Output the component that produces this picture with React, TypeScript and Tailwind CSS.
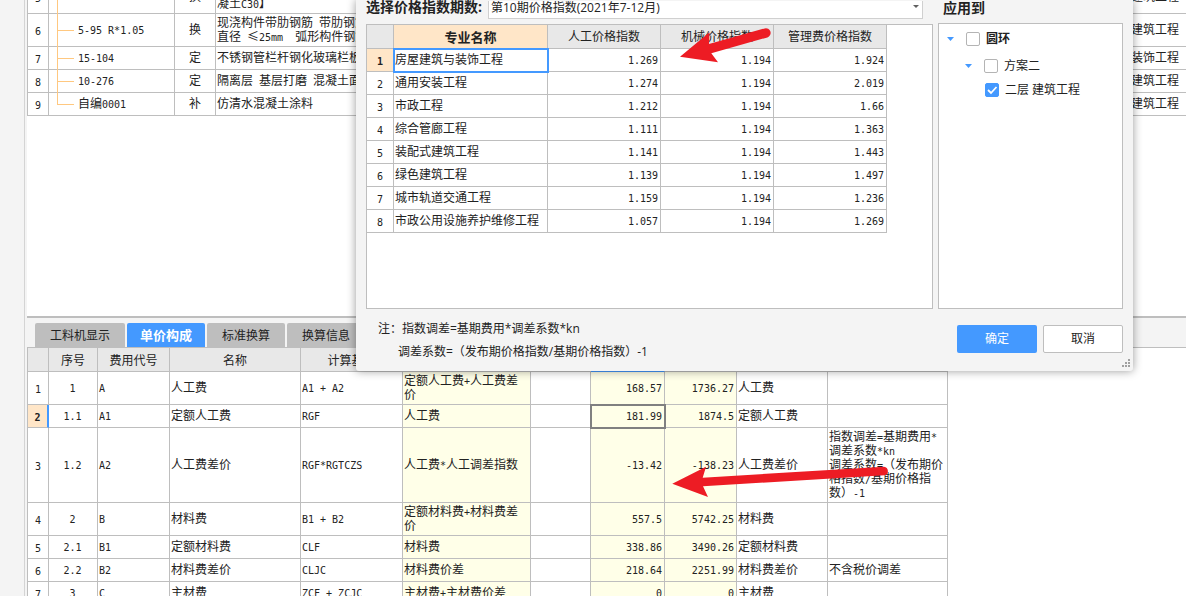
import { Fragment, type ReactNode } from "react";

const GRID_FONT = "font-['Noto_Sans_CJK_SC',sans-serif] text-xs leading-[14px] text-[#222222]";
const UI_FONT = "font-['Open_Sans','Noto_Sans_CJK_SC',sans-serif]";
const LINE = "border-[#bebebe]";

/** Grid text: Latin runs are set in half-width monospace, like the CJK cell grid. */
function Song({ text }: { text: string }) {
  const parts = text.split(/([\x20-\x7e]+)/).filter(Boolean);
  return (
    <>
      {parts.map((part, i) =>
        /^[\x20-\x7e]+$/.test(part) ? (
          <span key={i} className="font-['DejaVu_Sans_Mono',monospace] text-[10px] leading-none whitespace-pre">
            {part}
          </span>
        ) : (
          <Fragment key={i}>{part}</Fragment>
        ),
      )}
    </>
  );
}

function Lines({ text }: { text: string }) {
  return (
    <>
      {text.split("\n").map((line, i) => (
        <span key={i} className="block min-h-[14px] whitespace-nowrap">
          <Song text={line} />
        </span>
      ))}
    </>
  );
}

type Item = { no: string; code: string; kind: string; name: string; major: string; tall?: boolean };

const items: Item[] = [
  { no: "5", code: "", kind: "换", name: "\n凝土C30】", major: "建筑工程", tall: true },
  { no: "6", code: "5-95 R*1.05", kind: "换", name: "现浇构件带肋钢筋 带肋钢筋\n直径 ≤25mm  弧形构件钢筋", major: "建筑工程", tall: true },
  { no: "7", code: "15-104", kind: "定", name: "不锈钢管栏杆钢化玻璃栏板", major: "装饰工程" },
  { no: "8", code: "10-276", kind: "定", name: "隔离层 基层打磨 混凝土面", major: "建筑工程" },
  { no: "9", code: "自编0001", kind: "补", name: "仿清水混凝土涂料", major: "建筑工程" },
];

function ItemTable() {
  const cell = `border-r border-b ${LINE}`;
  return (
    <table className={`-mt-5 w-full table-fixed border-separate border-spacing-0 border-t border-l ${LINE} ${GRID_FONT}`}>
      <colgroup>
        <col className="w-[21px]" />
        <col className="w-[126px]" />
        <col className="w-[41px]" />
        <col />
        <col className="w-[55px]" />
      </colgroup>
      <tbody>
        {items.map((item, i) => (
          <tr key={item.no} className={item.tall ? "h-[33px]" : "h-[23px]"}>
            <td className={`${cell} p-0 text-center`}>
              <Song text={item.no} />
            </td>
            <td className={`${cell} relative pt-0 pr-0 pb-0.5 pl-[29px]`}>
              <span className={`absolute top-0 left-2 w-px bg-[#ffc880] ${i === items.length - 1 ? "bottom-1/2" : "-bottom-px"}`} />
              <span className="absolute top-1/2 left-2 h-px w-[17px] bg-[#ffc880]" />
              <Song text={item.code} />
            </td>
            <td className={`${cell} px-0 pt-0 pb-0.5 text-center`}>{item.kind}</td>
            <td className={`${cell} overflow-hidden px-px pt-0 pb-0.5`}>
              <Lines text={item.name} />
            </td>
            <td className={`border-b ${LINE} px-0 pt-0 pb-0.5 whitespace-nowrap`}>{item.major}</td>
          </tr>
        ))}
      </tbody>
    </table>
  );
}

const feeHeaders = ["", "序号", "费用代号", "名称", "计算基数", "", "", "", "", "", ""];

type Fee = { h: string; cells: string[] };

const fees: Fee[] = [
  { h: "h-[33px]", cells: ["1", "A", "人工费", "A1 + A2", "定额人工费+人工费差\n价", "", "168.57", "1736.27", "人工费", ""] },
  { h: "h-[23px]", cells: ["1.1", "A1", "定额人工费", "RGF", "人工费", "", "181.99", "1874.5", "定额人工费", ""] },
  { h: "h-[75px]", cells: ["1.2", "A2", "人工费差价", "RGF*RGTCZS", "人工费*人工调差指数", "", "-13.42", "-138.23", "人工费差价", "指数调差=基期费用*\n调差系数*kn\n调差系数=（发布期价\n格指数/基期价格指\n数）-1"] },
  { h: "h-[33px]", cells: ["2", "B", "材料费", "B1 + B2", "定额材料费+材料费差\n价", "", "557.5", "5742.25", "材料费", ""] },
  { h: "h-[23px]", cells: ["2.1", "B1", "定额材料费", "CLF", "材料费", "", "338.86", "3490.26", "定额材料费", ""] },
  { h: "h-[23px]", cells: ["2.2", "B2", "材料费差价", "CLJC", "材料费价差", "", "218.64", "2251.99", "材料费差价", "不含税价调差"] },
  { h: "h-[23px]", cells: ["3", "C", "主材费", "ZCF + ZCJC", "主材费+主材费价差", "", "0", "0", "主材费", ""] },
];

const feeCellStyle = [
  "text-center",
  "",
  "",
  "",
  "bg-[#ffffe8]",
  "",
  "bg-[#ffffe8] text-right",
  "bg-[#ffffe8] text-right",
  "",
  "",
];

function FeeTable() {
  const selected = 1;
  return (
    <table className={`w-[921px] table-fixed border-separate border-spacing-0 border-l ${LINE} ${GRID_FONT}`}>
      <colgroup>
        <col className="w-[21px]" />
        <col className="w-[49px]" />
        <col className="w-[72px]" />
        <col className="w-[131px]" />
        <col className="w-[102px]" />
        <col className="w-[128px]" />
        <col className="w-[60px]" />
        <col className="w-[74px]" />
        <col className="w-[72px]" />
        <col className="w-[91px]" />
        <col className="w-[120px]" />
      </colgroup>
      <thead>
        <tr className="h-6">
          {feeHeaders.map((h, i) => (
            <th key={i} className={`border-r border-b bg-[#e8e8e8] p-0 font-normal ${i === 7 ? "border-r-[#bebebe] border-b-[#4499ff]" : LINE}`}>
              {h}
            </th>
          ))}
        </tr>
      </thead>
      <tbody>
        {fees.map((fee, r) => (
          <tr key={r} className={fee.h}>
            <th
              className={`border-b border-b-[#bebebe] p-0 ${
                r === selected ? "border-r-2 border-r-[#4499ff] bg-[#ffe6c8] font-bold" : "border-r border-r-[#bebebe] font-normal"
              }`}
            >
              <Song text={String(r + 1)} />
            </th>
            {fee.cells.map((text, c) => (
              <td
                key={c}
                className={`border-r border-b pt-0 pr-0.5 pb-0.5 pl-px ${LINE} ${feeCellStyle[c]} ${
                  r === selected && c === 6 ? "outline-2 -outline-offset-1 outline-[#808080]" : ""
                }`}
              >
                <Lines text={text} />
              </td>
            ))}
          </tr>
        ))}
      </tbody>
    </table>
  );
}

const tabs = [
  { label: "工料机显示", width: "w-[90px]" },
  { label: "单价构成", width: "w-[78px]", active: true },
  { label: "标准换算", width: "w-[78px]" },
  { label: "换算信息", width: "w-[78px]" },
];

const indices = [
  ["房屋建筑与装饰工程", "1.269", "1.194", "1.924"],
  ["通用安装工程", "1.274", "1.194", "2.019"],
  ["市政工程", "1.212", "1.194", "1.66"],
  ["综合管廊工程", "1.111", "1.194", "1.363"],
  ["装配式建筑工程", "1.141", "1.194", "1.443"],
  ["绿色建筑工程", "1.139", "1.194", "1.497"],
  ["城市轨道交通工程", "1.159", "1.194", "1.236"],
  ["市政公用设施养护维修工程", "1.057", "1.194", "1.269"],
];

function IndexTable() {
  return (
    <table className={`w-[520px] table-fixed border-separate border-spacing-0 ${GRID_FONT}`}>
      <colgroup>
        <col className="w-[27px]" />
        <col className="w-[154px]" />
        <col className="w-[113px]" />
        <col className="w-[113px]" />
        <col className="w-[113px]" />
      </colgroup>
      <thead>
        <tr className="h-6">
          <th className={`border-r border-b bg-[#e8e8e8] p-0 ${LINE}`} />
          <th className={`border-r border-b bg-[#ffe6c8] p-0 text-[13px] font-bold ${LINE}`}>专业名称</th>
          {["人工价格指数", "机械价格指数", "管理费价格指数"].map((h) => (
            <th key={h} className={`border-r border-b bg-[#e8e8e8] px-0 pt-0 pb-0.5 font-normal ${LINE}`}>
              {h}
            </th>
          ))}
        </tr>
      </thead>
      <tbody>
        {indices.map((row, r) => (
          <tr key={r} className="h-[23px]">
            <th className={`border-r border-b p-0 ${LINE} ${r === 0 ? "bg-[#ffe6c8] font-bold" : "font-normal"}`}>
              <Song text={String(r + 1)} />
            </th>
            {row.map((text, c) => (
              <td
                key={c}
                className={`border-r border-b pt-0 pr-0.5 pb-0.5 pl-px ${LINE} ${c > 0 ? "text-right" : "whitespace-nowrap"} ${
                  r === 0 && c === 0 ? "outline-2 -outline-offset-1 outline-[#4499ff]" : ""
                }`}
              >
                <Song text={text} />
              </td>
            ))}
          </tr>
        ))}
      </tbody>
    </table>
  );
}

function TreeNode({ indent, expanded, checked, bold, children }: { indent: string; expanded?: boolean; checked?: boolean; bold?: boolean; children: ReactNode }) {
  return (
    <li className={`flex h-6 items-center ${indent}`}>
      {expanded && (
        <button type="button" aria-label="展开" className="mr-3 flex w-[7px]">
          <svg viewBox="0 0 7 4" className="h-1 w-[7px]" fill="#4499ff">
            <path d="M0 0h7L3.5 4z" />
          </svg>
        </button>
      )}
      <label className="flex items-center gap-1.5">
        <span className="grid">
          <input
            type="checkbox"
            defaultChecked={checked}
            className="peer col-start-1 row-start-1 size-3.5 appearance-none rounded-[2px] border border-[#b4b4b4] bg-white checked:border-[#4499ff] checked:bg-[#4499ff]"
          />
          <svg viewBox="0 0 14 14" className="pointer-events-none invisible col-start-1 row-start-1 size-3.5 peer-checked:visible" fill="none" stroke="white" strokeWidth="1.8">
            <path d="M3 7l3 3 5.5-6" />
          </svg>
        </span>
        <span className={bold ? "font-bold" : ""}>{children}</span>
      </label>
    </li>
  );
}

function IndexDialog() {
  return (
    <div
      role="dialog"
      aria-label="价格指数"
      className={`absolute top-0 right-[53px] left-[356px] rounded-b-[3px] bg-[#f4f4f4] text-xs text-[#222222] shadow-[0_0_10px_rgba(0,0,0,0.4)] ${UI_FONT}`}
    >
      <div className="flex gap-[5px] px-2.5">
        <section className="flex min-w-0 flex-1 flex-col">
          <div className="flex h-6 items-start pr-2.5">
            <label htmlFor="period" className="w-[122px] text-sm leading-[14px] font-bold whitespace-nowrap">
              选择价格指数期数:
            </label>
            <div className="relative flex-1">
              <select id="period" className="h-[18px] w-full appearance-none border border-t-0 border-[#d0d0d0] bg-white pb-1 pl-0.5 text-xs leading-[14px]">
                <option>第10期价格指数(2021年7-12月)</option>
              </select>
              <svg viewBox="0 0 6 3" className="pointer-events-none absolute top-[5px] right-1 h-[3px] w-1.5" fill="#606060">
                <path d="M0 0h6L3 3z" />
              </svg>
            </div>
          </div>
          <div className={`min-h-[285px] border bg-white ${LINE}`}>
            <IndexTable />
          </div>
        </section>
        <section className="flex w-[185px] flex-col">
          <h2 className="h-[23px] pl-[5px] text-sm leading-4 font-bold">应用到</h2>
          <ul className={`flex-1 border bg-white pt-[3px] pl-2 ${LINE}`}>
            <TreeNode indent="mb-[3px]" expanded bold>
              圆环
            </TreeNode>
            <TreeNode indent="pl-[18px]" expanded>
              方案二
            </TreeNode>
            <TreeNode indent="pl-[38px]" checked>
              二层 建筑工程
            </TreeNode>
          </ul>
        </section>
      </div>
      <div className="flex items-start justify-between pt-2 pr-2.5 pl-[22px]">
        <div className="leading-[23px]">
          <p>注：指数调差=基期费用*调差系数*kn</p>
          <p className="pl-5">调差系数=（发布期价格指数/基期价格指数）-1</p>
        </div>
        <div className="flex gap-1.5 pt-2">
          <button type="button" className="h-7 w-20 rounded-[2px] bg-[#4499ff] text-white">
            确定
          </button>
          <button type="button" className="h-7 w-20 rounded-[2px] border border-[#bebebe] bg-white">
            取消
          </button>
        </div>
      </div>
      <div className="flex h-2 justify-end pr-[3px]">
        <svg viewBox="0 0 8 8" className="-mt-1 size-2" fill="#a0a0a0">
          <path d="M6 0h2v2H6zM3 3h2v2H3zM6 3h2v2H6zM0 6h2v2H0zM3 6h2v2H3zM6 6h2v2H6z" />
        </svg>
      </div>
    </div>
  );
}

export default function App() {
  return (
    <div className="relative flex h-screen overflow-hidden bg-white">
      <aside className="w-[27px] shrink-0 bg-[#f4f4f4] pl-6">
        <div className="h-full w-px bg-[#d4d4d4]" />
      </aside>
      <main className="flex min-w-0 flex-1 flex-col">
        <div className="h-[316px] shrink-0 overflow-hidden">
          <ItemTable />
        </div>
        <div className={`flex h-8 shrink-0 items-end gap-0.5 border-t-2 border-b bg-[#f4f4f4] pl-2 ${LINE} ${GRID_FONT}`}>
          {tabs.map((tab) => (
            <button
              key={tab.label}
              type="button"
              className={`h-6 rounded-t-[2px] ${tab.width} ${tab.active ? "bg-[#4499ff] text-[13px] font-bold text-white" : "bg-[#bebebe]"}`}
            >
              {tab.label}
            </button>
          ))}
        </div>
        <FeeTable />
      </main>
      <IndexDialog />
      <svg className="pointer-events-none absolute top-0 left-0" width="960" height="520" viewBox="0 0 960 520" fill="#ed1c24">
        <path d="M680 56.7L709.5 32.3L709 44L764.7 28.4A4.7 4.7 0 0 1 767.4 37.4L711.3 53.3L718 62.3Z" />
        <path d="M672.3 483.7L706 466.7L702.7 477.7L884 466.7A4.4 4.4 0 0 1 884.7 475.3L703 486.3L708 497Z" />
      </svg>
    </div>
  );
}
